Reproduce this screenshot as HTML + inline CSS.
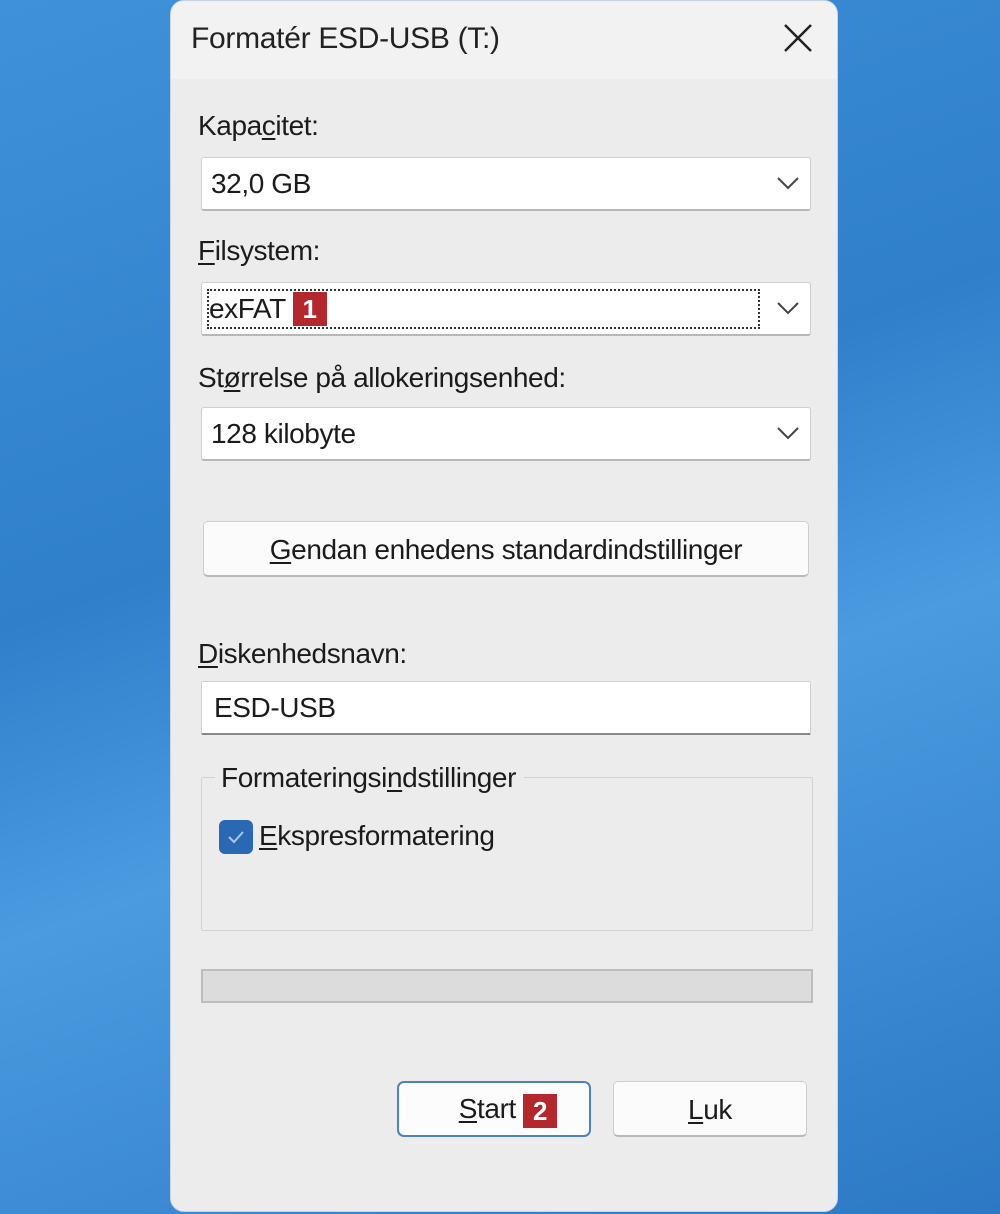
<!DOCTYPE html>
<html><head><style>
*{box-sizing:border-box;margin:0;padding:0}
body{width:1000px;height:1214px;overflow:hidden;background:linear-gradient(160deg,#3f92d8 0%,#2f7fcb 40%,#4a9be0 60%,#2c78c4 100%);font-family:"Liberation Sans",sans-serif;color:#1b1b1b;position:relative}
.dlg{position:absolute;left:170px;top:0;width:668px;height:1212px;background:#ececec;border-radius:14px;overflow:hidden;border:1px solid #c9d6e2}
.title{height:78px;background:#f2f2f2;font-size:30px;padding:21px 0 0 20px;color:#222;position:relative;letter-spacing:-0.3px}
.x{position:absolute;right:22px;top:20px;width:34px;height:34px}
.lbl{position:absolute;left:27px;font-size:28px;letter-spacing:-0.4px}
.box{position:absolute;left:30px;width:610px;height:54px;background:#fff;border:1px solid #cfcfcf;border-bottom:2px solid #b7b7b7;border-radius:3px;font-size:28px;padding:10px 0 0 9px;letter-spacing:-0.4px}
.chev{position:absolute;right:10px;top:17px;width:24px;height:16px}
.badge{display:inline-block;background:#b3282d;color:#fff;font-weight:bold;font-size:26px;width:34px;height:34px;text-align:center;line-height:34px;vertical-align:middle;letter-spacing:0}
.btn{position:absolute;background:#fbfbfb;border:1px solid #cdcdcd;border-bottom:2px solid #b9b9b9;border-radius:5px;font-size:28px;text-align:center;letter-spacing:-0.4px}
u{text-decoration:underline;text-underline-offset:3px}
</style></head><body>
<div class="dlg">
<div class="title">Formatér ESD-USB (T:)
<svg class="x" viewBox="0 0 34 34"><path d="M4 4L30 30M30 4L4 30" stroke="#222" stroke-width="2.5"/></svg></div>
<div class="lbl" style="top:109px">Kapa<u>c</u>itet:</div>
<div class="box" style="top:156px">32,0 GB<svg class="chev" viewBox="0 0 24 16"><path d="M2 3L12 13L22 3" fill="none" stroke="#444" stroke-width="2"/></svg></div>
<div class="lbl" style="top:234px"><u>F</u>ilsystem:</div>
<div class="box" style="top:281px;padding:0"><div style="position:absolute;left:5px;top:6px;width:553px;height:40px;border:2px dotted #333;padding:2px 0 0 0">exFAT <span class="badge" style="margin-top:-4px">1</span></div><svg class="chev" viewBox="0 0 24 16"><path d="M2 3L12 13L22 3" fill="none" stroke="#444" stroke-width="2"/></svg></div>
<div class="lbl" style="top:361px">St<u>ø</u>rrelse på allokeringsenhed:</div>
<div class="box" style="top:406px">128 kilobyte<svg class="chev" viewBox="0 0 24 16"><path d="M2 3L12 13L22 3" fill="none" stroke="#444" stroke-width="2"/></svg></div>
<div class="btn" style="left:32px;top:520px;width:606px;height:56px;padding-top:12px"><u>G</u>endan enhedens standardindstillinger</div>
<div class="lbl" style="top:637px"><u>D</u>iskenhedsnavn:</div>
<div class="box" style="top:680px;border-radius:2px;padding-left:12px;border-bottom:2px solid #888">ESD-USB</div>
<div style="position:absolute;left:30px;top:776px;width:612px;height:154px;border:1px solid #d2d2d2;border-radius:2px"></div>
<div class="lbl" style="top:761px;left:44px;background:#ececec;padding:0 8px 0 6px">Formateringsi<u>n</u>dstillinger</div>
<div style="position:absolute;left:48px;top:819px;width:34px;height:34px;background:#2a68b4;border-radius:6px"><svg viewBox="0 0 34 34" width="34" height="34"><path d="M10 17L15 22L24 12" fill="none" stroke="#a9c8ee" stroke-width="2"/></svg></div>
<div class="lbl" style="top:819px;left:88px"><u>E</u>kspresformatering</div>
<div style="position:absolute;left:30px;top:968px;width:612px;height:34px;background:#dcdcdc;border:2px solid #bdbdbd"></div>
<div class="btn" style="left:226px;top:1080px;width:194px;height:56px;border:2px solid #4b82c0;border-radius:7px;padding-top:10px;background:#fcfcfc"><span style="margin-left:28px"><u>S</u>tart</span> <span class="badge">2</span></div>
<div class="btn" style="left:442px;top:1080px;width:194px;height:56px;padding-top:12px"><u>L</u>uk</div>
</div>
</body></html>
